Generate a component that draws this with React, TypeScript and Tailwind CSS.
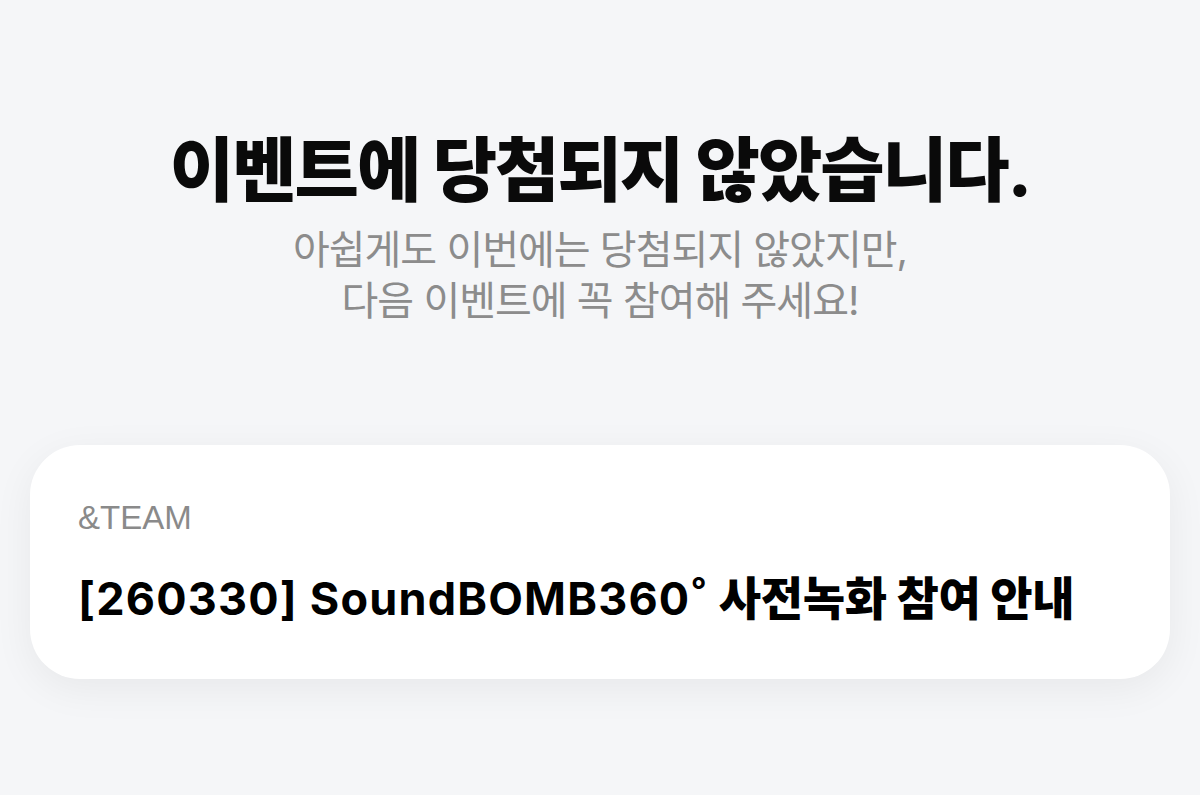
import React from 'react';

const KR = "font-['Inter','Noto_Sans_CJK_KR',sans-serif]";

const ResultCard: React.FC<{ artist: string; code: string; name: string; note: string }> = ({ artist, code, name, note }) => (
  <div className="mx-[30px] rounded-[50px] bg-white pl-12 pr-10 pt-[56px] pb-[55px] shadow-[0_10px_40px_rgba(0,0,0,0.06)]">
    <p className="font-['Liberation_Sans','Noto_Sans_CJK_KR',sans-serif] text-[33px] leading-none text-[#8a8a8a]">{artist}</p>
    <p className={`${KR} mt-[39px] text-[45px] font-bold leading-[50px] text-black`}>
      <span className="tracking-[1.2px]">
        [{code}] {name}
      </span>{' '}
      <span className="text-[46px] font-extrabold tracking-[-0.3px]">{note}</span>
    </p>
  </div>
);

export default function App() {
  return (
    <div className="min-h-[795px] w-[1200px] bg-[#f5f6f8] pt-[136px]">
      <div className="flex flex-col items-center text-center">
        <h1 className={`${KR} text-[70px] font-extrabold leading-none tracking-[-2px] text-[#0a0a0a]`}>
          이벤트에 당첨되지 않았습니다.
        </h1>
        <p className={`${KR} mt-[18px] text-[40px] leading-[51px] tracking-[-1px] text-[#8c8c8c]`}>
          아쉽게도 이번에는 당첨되지 않았지만,
          <br />
          다음 이벤트에 꼭 참여해 주세요!
        </p>
      </div>
      <div className="mt-[119px]">
        <ResultCard artist="&TEAM" code="260330" name="SoundBOMB360˚" note="사전녹화 참여 안내" />
      </div>
    </div>
  );
}
